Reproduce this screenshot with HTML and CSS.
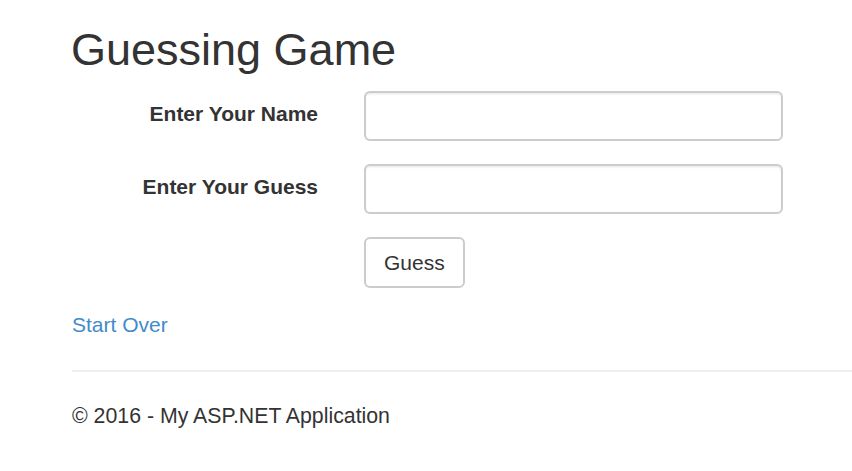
FILE: index.html
```html
<!DOCTYPE html>
<html>
<head>
<meta charset="utf-8">
<title>Guessing Game</title>
<link rel="stylesheet" href="styles.css">
</head>
<body>
<div class="page">
  <h2 class="title">Guessing Game</h2>
  <form class="form">
    <div class="row">
      <label class="label" for="name">Enter Your Name</label>
      <input class="input" id="name" type="text">
    </div>
    <div class="row">
      <label class="label" for="guess">Enter Your Guess</label>
      <input class="input" id="guess" type="text">
    </div>
    <div class="row">
      <span></span>
      <div><button class="btn" type="button">Guess</button></div>
    </div>
  </form>
  <a class="link" href="#">Start Over</a>
  <hr class="rule">
  <footer class="footer">&copy; 2016 - My ASP.NET Application</footer>
</div>
</body>
</html>
```

FILE: styles.css
```css
html, body {
  margin: 0;
  padding: 0;
  background: #fff;
}
body {
  font-family: "Liberation Sans", Arial, Helvetica, sans-serif;
  font-size: 21px;
  line-height: 30px;
  color: #333;
}
.page {
  padding-left: 72px;
}
.title {
  font-size: 45px;
  font-weight: 500;
  line-height: 49.5px;
  margin: 25px 0 16px -1px;
}
.form {
  display: flex;
  flex-direction: column;
  gap: 23px;
  margin: 0;
}
.row {
  display: grid;
  grid-template-columns: 246px 419px;
  column-gap: 46px;
  align-items: start;
}
.label {
  font-weight: bold;
  text-align: right;
  padding-top: 8px;
  line-height: 30px;
}
.input {
  box-sizing: border-box;
  height: 50px;
  width: 419px;
  margin: 0;
  border: 2px solid #ccc;
  border-radius: 6px;
  box-shadow: inset 0 1.5px 1.5px rgba(0,0,0,.075);
  font: inherit;
  padding: 9px 18px;
  background: #fff;
}
.btn {
  box-sizing: border-box;
  height: 51px;
  margin: 0;
  padding: 9px 18px;
  font: inherit;
  line-height: 30px;
  color: #333;
  background: #fff;
  border: 2px solid #ccc;
  border-radius: 6px;
}
.link {
  display: block;
  width: max-content;
  margin-top: 22px;
  color: #428bca;
  text-decoration: none;
}
.rule {
  margin: 30px 0 0 0;
  border: 0;
  border-top: 2px solid #eee;
  height: 0;
}
.footer {
  margin-top: 29px;
  font-size: 21.3px;
}
```
